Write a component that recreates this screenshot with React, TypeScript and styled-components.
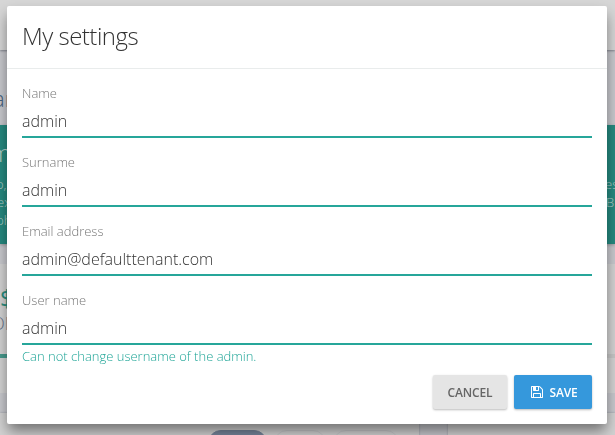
import React from "react";
import styled, { createGlobalStyle } from "styled-components";

const GlobalStyle = createGlobalStyle`
  * { box-sizing: border-box; }
  html, body { margin: 0; height: 100%; overflow: hidden; }
  body { font-family: "Open Sans", sans-serif; font-weight: 300; background: #c7c8cd; }
`;

const Page = styled.div`
  height: 435px;
  overflow: hidden;
  display: flex;
  flex-direction: column;
`;

const TopBar = styled.header`
  flex: none;
  height: 50px;
  background: #d6d6d6;
  box-shadow: 0 1px 2px rgba(60, 65, 80, 0.5);
`;

const Heading = styled.div`
  flex: none;
  height: 75px;
  padding-top: 32px;
  font-size: 22px;
  line-height: 32px;
  color: #48627e;
`;

const Cut = styled.span<{ $shift: number }>`
  display: block;
  white-space: nowrap;
  margin-left: ${(p) => p.$shift}px;
`;

const Banner = styled.section`
  flex: none;
  display: flex;
  justify-content: space-between;
  height: 119px;
  background: #26897f;
  color: #b4cfc9;
  font-size: 13px;
  line-height: 18px;
  box-shadow: 0 1px 3px rgba(0, 0, 0, 0.25);
`;

const BannerTitle = styled.div`
  height: 50px;
  padding-top: 12px;
  font-size: 24px;
  line-height: 32px;
`;

const BannerRight = styled.div`
  width: 10px;
  padding-top: 50px;
  overflow: hidden;
`;

const Stat = styled.section`
  flex: none;
  display: flex;
  justify-content: space-between;
  height: 129px;
  margin: 20px 0;
  padding-top: 20px;
  background: #d2d2d2;
`;

const Amount = styled.div`
  height: 27px;
  font-size: 24px;
  font-weight: 400;
  line-height: 27px;
  color: #2a8d80;
`;

const Caption = styled.div`
  height: 43px;
  font-size: 18px;
  line-height: 24px;
  color: #66728a;
`;

const Track = styled.div<{ $color: string }>`
  width: 60px;
  height: 4px;
  background: ${(p) => p.$color};
`;

const StatEnd = styled.div`
  padding-top: 70px;
`;

const Charts = styled.section`
  flex: 1;
  display: grid;
  grid-template-columns: 419px 1fr;
  column-gap: 29px;
`;

const ChartPanel = styled.div`
  background: #d2d2d2;
  box-shadow: 0 0 2px rgba(60, 65, 80, 0.35);
`;

const Periods = styled.div`
  display: flex;
  gap: 7px;
  padding: 17px 0 0 208px;
`;

const Pill = styled.div<{ $width: number; $active?: boolean }>`
  flex: none;
  width: ${(p) => p.$width}px;
  height: 26px;
  border-radius: 13px;
  border: 1px solid ${(p) => (p.$active ? "#76849a" : "#c6c7c9")};
  background: ${(p) => (p.$active ? "#76849a" : "transparent")};
`;

const Overlay = styled.div`
  position: fixed;
  inset: 0;
  padding: 6px 8px 0 7px;
`;

const Dialog = styled.div`
  width: 600px;
  height: 418px;
  display: flex;
  flex-direction: column;
  background: #fff;
  border-radius: 2px;
  box-shadow: 0 8px 14px -1px rgba(0, 0, 0, 0.46);
`;

const DialogHeader = styled.header`
  flex: none;
  height: 63px;
  padding: 13px 15px 0;
  border-bottom: 1px solid #e9ecec;
`;

const Title = styled.h4`
  margin: 0;
  font-size: 24px;
  font-weight: 300;
  line-height: 33px;
  letter-spacing: -0.5px;
  color: #333;
`;

const Form = styled.div`
  padding: 14px 15px 0;
`;

const Field = styled.label`
  display: flex;
  flex-direction: column;
  height: 69px;
`;

const Label = styled.span`
  flex: none;
  height: 20px;
  font-size: 13px;
  line-height: 20px;
  color: #777;
`;

const Input = styled.input`
  flex: none;
  height: 35px;
  padding: 3px 0 0;
  border: 0;
  border-bottom: 2px solid #26a69a;
  border-radius: 0;
  outline: 0;
  background: transparent;
  font: 300 16px "Open Sans", sans-serif;
  color: #333;
`;

const Help = styled.span`
  flex: none;
  margin-top: 2px;
  font-size: 13px;
  line-height: 18px;
  color: #1fa597;
`;

const Footer = styled.footer`
  display: flex;
  justify-content: flex-end;
  gap: 7px;
  margin-top: auto;
  padding: 0 15px 15px;
`;

const Button = styled.button<{ $primary?: boolean }>`
  display: flex;
  align-items: center;
  justify-content: center;
  gap: 6px;
  width: ${(p) => (p.$primary ? 78 : 74)}px;
  height: 34px;
  padding: ${(p) => (p.$primary ? "0 0 0 3px" : "0")};
  border: 0;
  border-radius: 2px;
  background: ${(p) => (p.$primary ? "#3598dc" : "#e5e5e5")};
  color: ${(p) => (p.$primary ? "#fff" : "#666")};
  font: 600 12px "Open Sans", sans-serif;
  letter-spacing: -0.15px;
  box-shadow: 0 1px 3px rgba(0, 0, 0, 0.1), 0 1px 2px rgba(0, 0, 0, 0.18);
`;

const SaveIcon = () => (
  <svg width="12" height="12" viewBox="0 128 1536 1536" fill="currentColor" aria-hidden="true">
    <path d="M384 1536h768v-384h-768v384zM1280 1536h128v-896q0-14-10-38.5t-20-34.5l-281-281q-10-10-34-20t-39-10v416q0 40-28 68t-68 28h-576q-40 0-68-28t-28-68v-416h-128v1280h128v-416q0-40 28-68t68-28h832q40 0 68 28t28 68v416zM896 608v-320q0-13-9.5-22.5t-22.5-9.5h-192q-13 0-22.5 9.5t-9.5 22.5v320q0 13 9.5 22.5t22.5 9.5h192q13 0 22.5-9.5t9.5-22.5zM1536 640v928q0 40-28 68t-68 28h-1344q-40 0-68-28t-28-68v-1344q0-40 28-68t68-28h928q40 0 88 20t76 48l280 280q28 28 48 76t20 88z" />
  </svg>
);

const fields = [
  { label: "Name", value: "admin" },
  { label: "Surname", value: "admin" },
  { label: "Email address", value: "admin@defaulttenant.com" },
  { label: "User name", value: "admin", help: "Can not change username of the admin." },
];

export default function App() {
  return (
    <>
      <GlobalStyle />
      <Page>
        <TopBar />
        <Heading><Cut $shift={-7}>ar</Cut></Heading>
        <Banner>
          <div>
            <BannerTitle><Cut $shift={-10}>m</Cut></BannerTitle>
            <Cut $shift={-4}>o,</Cut>
            <Cut $shift={-3}>ex</Cut>
            <Cut $shift={-4}>ph</Cut>
          </div>
          <BannerRight>
            <Cut $shift={0}>es</Cut>
            <Cut $shift={1}>BI</Cut>
          </BannerRight>
        </Banner>
        <Stat>
          <div>
            <Amount>$</Amount>
            <Caption><Cut $shift={-9}>OF</Cut></Caption>
            <Track $color="#46998c" />
          </div>
          <StatEnd><Track $color="#c6c6c6" /></StatEnd>
        </Stat>
        <Charts>
          <ChartPanel>
            <Periods>
              <Pill $width={59} $active />
              <Pill $width={52} />
              <Pill $width={66} />
            </Periods>
          </ChartPanel>
          <ChartPanel />
        </Charts>
      </Page>
      <Overlay>
        <Dialog role="dialog">
          <DialogHeader><Title>My settings</Title></DialogHeader>
          <Form>
            {fields.map((f) => (
              <Field key={f.label}>
                <Label>{f.label}</Label>
                <Input defaultValue={f.value} />
                {f.help && <Help>{f.help}</Help>}
              </Field>
            ))}
          </Form>
          <Footer>
            <Button>CANCEL</Button>
            <Button $primary><SaveIcon />SAVE</Button>
          </Footer>
        </Dialog>
      </Overlay>
    </>
  );
}
